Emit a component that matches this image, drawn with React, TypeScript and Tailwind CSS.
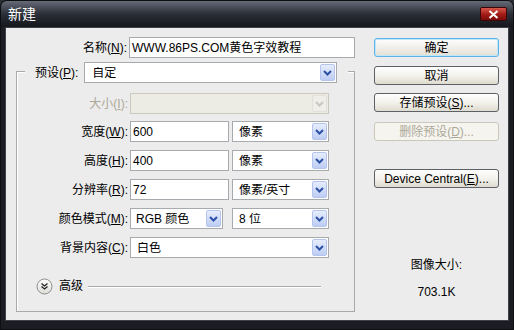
import React from "react";

function Arrow({ disabled = false }: { disabled?: boolean }) {
  return (
    <div
      className={`flex h-[17px] w-[15px] items-center justify-center rounded-[2px] border ${
        disabled
          ? "border-[#e2e1d9] bg-[#efeee8]"
          : "border-[#b4c4ec] bg-gradient-to-b from-[#e6edfd] to-[#bdcdf3]"
      }`}
    >
      <svg width="9" height="6" viewBox="0 0 9 6">
        <polyline
          points="1,1 4.5,4.5 8,1"
          fill="none"
          stroke={disabled ? "#c9c8bf" : "#2b50a6"}
          strokeWidth="2"
        />
      </svg>
    </div>
  );
}

function Select({
  value = "",
  width,
  disabled = false,
  pad = "pl-[6px]",
}: {
  value?: string;
  width: string;
  disabled?: boolean;
  pad?: string;
}) {
  return (
    <div
      className={`flex h-[21px] items-center border pr-[1px] ${pad} ${width} ${
        disabled ? "border-[#cbc9bd] bg-[#ecebe4]" : "border-[#a7abb0] bg-white"
      }`}
    >
      <span className="flex-1 truncate leading-none text-black">{value}</span>
      <Arrow disabled={disabled} />
    </div>
  );
}

function Input({ value, width }: { value: string; width: string }) {
  return (
    <div className={`flex h-[21px] items-center border border-[#a7abb0] bg-white pl-[2px] ${width}`}>
      <span className="leading-none text-black">{value}</span>
    </div>
  );
}

function Label({ children, disabled = false }: { children: React.ReactNode; disabled?: boolean }) {
  return (
    <div className={`w-[113px] shrink-0 pr-[2px] text-right ${disabled ? "text-[#aca899]" : "text-black"}`}>
      {children}
    </div>
  );
}

function Button({
  children,
  focused = false,
  disabled = false,
}: {
  children: React.ReactNode;
  focused?: boolean;
  disabled?: boolean;
}) {
  return (
    <div
      className={`flex h-[19px] w-[125px] items-center justify-center rounded-[3px] border ${
        disabled
          ? "border-[#cbc8bb] bg-[#f5f4ee] text-[#aca899]"
          : focused
          ? "border-[#5fb2e4] bg-gradient-to-b from-[#fefefe] to-[#e3e0d4] text-black shadow-[inset_0_0_0_1px_#bfe7fb]"
          : "border-[#5e6067] bg-gradient-to-b from-[#fefefe] via-[#f3f2ec] to-[#dedbcf] text-black"
      }`}
    >
      {children}
    </div>
  );
}

export default function App() {
  return (
    <div className="h-[330px] w-[514px] bg-[#2a2d34] font-['Liberation_Sans','Noto_Sans_CJK_SC',sans-serif] text-[12px]">
      <div className="flex h-full flex-col rounded-t-[7px] border border-[#0d0e12] bg-[#1b1d23]">
        <div className="flex h-[26px] items-center justify-between rounded-t-[6px] bg-gradient-to-b from-[#666b78] via-[#2c2f38] to-[#15171c] pl-[7px] pr-[6px]">
          <span className="text-[14px] leading-none text-white">新建</span>
          <div className="flex h-[14px] w-[27px] items-center justify-center rounded-[2px] border border-[#3a0606] bg-gradient-to-b from-[#d8564a] via-[#a51d18] to-[#7c0b0b]">
            <svg width="11" height="9" viewBox="0 0 11 9">
              <path d="M1.5 1 L9.5 8 M9.5 1 L1.5 8" stroke="#fff" strokeWidth="2" />
            </svg>
          </div>
        </div>

        <div className="mx-[4px] mb-[8px] flex flex-1 border border-[#3e424b] bg-[#ececec]">
          <div className="flex flex-col pl-[10px] pt-[9px]">
            <div className="flex items-center">
              <Label>
                名称(<u>N</u>):
              </Label>
              <Input value="WWW.86PS.COM黄色字效教程" width="w-[226px]" />
            </div>

            <div className="mt-[13px] flex h-[241px] w-[339px] flex-col border border-[#a9a9a9] shadow-[inset_1px_1px_0_#ffffff]">
              <div className="-mt-[10px] ml-[8px] flex w-[323px] items-center bg-[#ececec] pl-[10px] pr-[7px]">
                <span className="mr-[6px] text-black">
                  预设(<u>P</u>):
                </span>
                <Select value="自定" width="w-[253px]" pad="pl-[7px]" />
              </div>

              <div className="mt-[10px] flex items-center">
                <Label disabled>
                  大小(<u>I</u>):
                </Label>
                <Select width="w-[199px]" disabled />
              </div>

              <div className="mt-[7px] flex items-center">
                <Label>
                  宽度(<u>W</u>):
                </Label>
                <Input value="600" width="w-[99px]" />
                <div className="ml-[3px]">
                  <Select value="像素" width="w-[97px]" />
                </div>
              </div>

              <div className="mt-[8px] flex items-center">
                <Label>
                  高度(<u>H</u>):
                </Label>
                <Input value="400" width="w-[99px]" />
                <div className="ml-[3px]">
                  <Select value="像素" width="w-[97px]" />
                </div>
              </div>

              <div className="mt-[8px] flex items-center">
                <Label>
                  分辨率(<u>R</u>):
                </Label>
                <Input value="72" width="w-[99px]" />
                <div className="ml-[3px]">
                  <Select value="像素/英寸" width="w-[97px]" />
                </div>
              </div>

              <div className="mt-[8px] flex items-center">
                <Label>
                  颜色模式(<u>M</u>):
                </Label>
                <Select value="RGB 颜色" width="w-[93px]" pad="pl-[5px]" />
                <div className="ml-[9px]">
                  <Select value="8 位" width="w-[97px]" />
                </div>
              </div>

              <div className="mt-[8px] flex items-center">
                <Label>
                  背景内容(<u>C</u>):
                </Label>
                <Select value="白色" width="w-[199px]" />
              </div>

              <div className="mt-[19px] flex items-center pl-[19px]">
                <svg width="17" height="17" viewBox="0 0 17 17">
                  <defs>
                    <linearGradient id="adv" x1="0" y1="0" x2="0" y2="1">
                      <stop offset="0" stopColor="#ffffff" />
                      <stop offset="1" stopColor="#dcdcd6" />
                    </linearGradient>
                  </defs>
                  <circle cx="8.5" cy="8.5" r="7.5" fill="url(#adv)" stroke="#8d8d8d" />
                  <polyline points="5.5,5.5 8.5,8 11.5,5.5" fill="none" stroke="#222" strokeWidth="1.3" />
                  <polyline points="5.5,8.5 8.5,11 11.5,8.5" fill="none" stroke="#222" strokeWidth="1.3" />
                </svg>
                <span className="ml-[6px] text-black">高级</span>
                <div className="ml-[5px] h-0 w-[233px] border-t border-[#a9a9a9] shadow-[0_1px_0_#ffffff]" />
              </div>
            </div>
          </div>

          <div className="ml-[19px] flex flex-col pt-[10px]">
            <Button focused>确定</Button>
            <div className="mt-[9px]">
              <Button>取消</Button>
            </div>
            <div className="mt-[8px]">
              <Button>
                存储预设(<u>S</u>)...
              </Button>
            </div>
            <div className="mt-[10px]">
              <Button disabled>
                删除预设(<u>D</u>)...
              </Button>
            </div>
            <div className="mt-[28px]">
              <Button>
                Device Central(<u>E</u>)...
              </Button>
            </div>
            <div className="mt-[68px] w-[125px] text-center text-black">图像大小:</div>
            <div className="mt-[9px] w-[125px] text-center text-black">703.1K</div>
          </div>
        </div>
      </div>
    </div>
  );
}
